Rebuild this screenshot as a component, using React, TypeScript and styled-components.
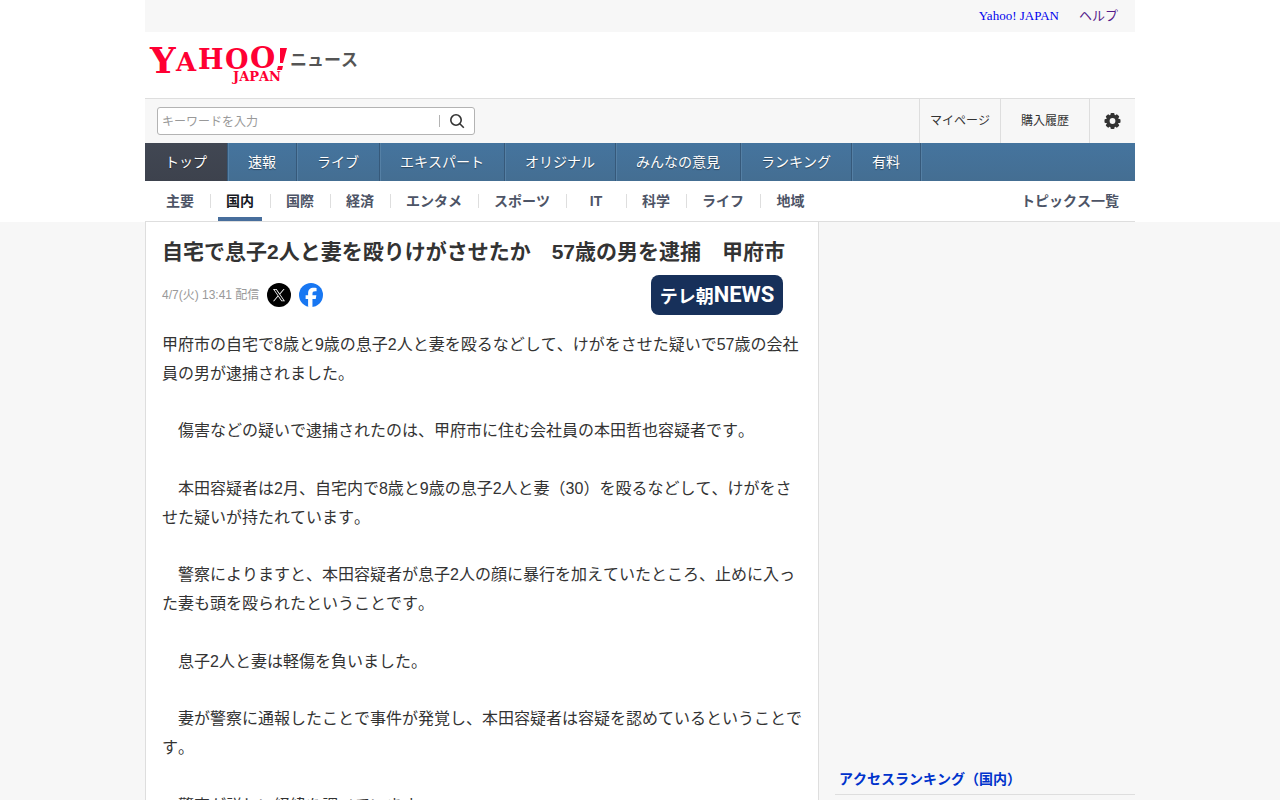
import React from "react";
import styled, { createGlobalStyle, css } from "styled-components";

const sans = `"Liberation Sans", "Noto Sans CJK JP", sans-serif`;

const GlobalStyle = createGlobalStyle`
  * { box-sizing: border-box; }
  body {
    margin: 0;
    background: #f7f7f7;
    color: #333;
    font-family: ${sans};
    font-kerning: none;
  }
  ul { margin: 0; padding: 0; list-style: none; }
  a { text-decoration: none; color: inherit; }
`;

const Header = styled.header`
  background: #fff;
`;

const Container = styled.div`
  width: 100%;
  max-width: 990px;
  margin: 0 auto;
`;

const UtilityBar = styled.div`
  display: flex;
  justify-content: flex-end;
  align-items: center;
  gap: 20px;
  height: 32px;
  padding: 0 17px;
  background: #f7f7f7;
  font: 13px/16px "Liberation Serif", "Noto Sans CJK JP", serif;
`;

const UtilityLink = styled.a<{ $visited?: boolean }>`
  color: ${(p) => (p.$visited ? "#551a8b" : "#0000ee")};
`;

const Masthead = styled.div`
  display: flex;
  align-items: flex-start;
  height: 66px;
  padding: 12px 4px;
`;

const LogoLink = styled.a`
  display: block;
  svg { display: block; overflow: visible; }
`;

const ToolBar = styled.div`
  display: flex;
  justify-content: space-between;
  align-items: center;
  height: 45px;
  padding-left: 12px;
  border-top: 1px solid #dedede;
  background: #f7f7f7;
`;

const SearchForm = styled.form`
  display: flex;
  align-items: center;
  width: 318px;
  height: 28px;
  border: 1px solid #b3b3b3;
  border-radius: 3px;
  background: #fff;
`;

const SearchInput = styled.input`
  flex: 1;
  min-width: 0;
  padding: 1px 4px 0;
  border: 0;
  outline: 0;
  background: transparent;
  font: 12px/18px ${sans};
  &::placeholder { color: #999; opacity: 1; }
`;

const SearchButton = styled.button`
  display: flex;
  align-items: center;
  justify-content: center;
  width: 35px;
  height: 12px;
  padding: 0;
  border: 0;
  border-left: 1px solid #b3b3b3;
  background: transparent;
  svg { flex: none; }
`;

const UserMenu = styled.ul`
  display: flex;
  height: 44px;
`;

const UserItem = styled.li<{ $pad: number }>`
  display: flex;
  align-items: center;
  padding: 0 ${(p) => p.$pad}px;
  border-left: 1px solid #dedede;
  font-size: 12px;
  line-height: 18px;
`;

const GearButton = styled.button`
  display: flex;
  padding: 0;
  border: 0;
  background: transparent;
`;

const GlobalNav = styled.nav`
  background: linear-gradient(#45749e, #446e92);
`;

const GlobalList = styled.ul`
  display: flex;
  height: 38px;
`;

const GlobalItem = styled.li<{ $active?: boolean }>`
  border-right: 1px solid #36597a;
  box-shadow: 1px 0 0 #5580a5;
  ${(p) => p.$active && css`background: linear-gradient(#414753, #3d424d);`}
`;

const GlobalLink = styled.a`
  display: block;
  padding: 0 20px;
  color: #fff;
  font-size: 14px;
  line-height: 38px;
  text-shadow: 0 1px 1px rgba(0, 0, 0, 0.4);
`;

const CategoryNav = styled.nav`
  display: flex;
  justify-content: space-between;
  align-items: center;
  height: 41px;
  padding: 0 16px 0 6px;
  border-bottom: 1px solid #dedede;
  color: #4d5466;
  font-size: 14px;
  font-weight: bold;
  line-height: 14px;
`;

const CategoryList = styled.ul`
  display: flex;
`;

const CategoryItem = styled.li<{ $active?: boolean }>`
  position: relative;
  min-width: 60px;
  padding: 0 16px 0 15px;
  border-right: 1px solid #dedede;
  text-align: center;
  white-space: nowrap;
  &:last-child { border-right: 0; }
  ${(p) =>
    p.$active &&
    css`
      color: #16191f;
      &::after {
        content: "";
        position: absolute;
        left: 7px;
        right: 8px;
        bottom: -13px;
        height: 4px;
        background: #476e9c;
      }
    `}
`;

const Columns = styled.div`
  display: flex;
  gap: 16px;
`;

const Article = styled.article`
  flex: 1;
  min-width: 0;
  padding: 16px 16px 32px;
  border: solid #dedede;
  border-width: 0 1px;
  background: #fff;
`;

const Title = styled.h1`
  margin: 0;
  font-size: 21px;
  line-height: 28px;
`;

const Meta = styled.div`
  display: flex;
  justify-content: space-between;
  align-items: center;
  height: 40px;
  margin: 9px 19px 16px 0;
`;

const Published = styled.div`
  display: flex;
  align-items: center;
  gap: 8px;
  color: #999;
  font-size: 12px;
  line-height: 16px;
`;

const ShareLink = styled.a`
  display: block;
  height: 24px;
`;

const MediaLogo = styled.a`
  display: flex;
  align-items: center;
  justify-content: center;
  width: 132px;
  height: 40px;
  border-radius: 8px;
  background: #17305a;
  color: #fff;
  font: bold 18px/24px "Noto Sans CJK JP", sans-serif;
`;

const MediaLatin = styled.span`
  font: bold 22px/24px Roboto, sans-serif;
`;

const Body = styled.div`
  font-size: 16px;
  line-height: 1.8;
  p { margin: 0 0 1.8em; }
`;

const Sidebar = styled.aside`
  flex: none;
  width: 300px;
`;

const AdSpace = styled.div`
  height: 542px;
`;

const RankingTitle = styled.h2`
  margin: 0;
  padding: 5px 4px;
  border-bottom: 1px solid #dedede;
  color: #0033cc;
  font-size: 14px;
  line-height: 20px;
`;

const globalItems = ["トップ", "速報", "ライブ", "エキスパート", "オリジナル", "みんなの意見", "ランキング", "有料"];
const categories = ["主要", "国内", "国際", "経済", "エンタメ", "スポーツ", "IT", "科学", "ライフ", "地域"];
const paragraphs = [
  "甲府市の自宅で8歳と9歳の息子2人と妻を殴るなどして、けがをさせた疑いで57歳の会社員の男が逮捕されました。",
  "　傷害などの疑いで逮捕されたのは、甲府市に住む会社員の本田哲也容疑者です。",
  "　本田容疑者は2月、自宅内で8歳と9歳の息子2人と妻（30）を殴るなどして、けがをさせた疑いが持たれています。",
  "　警察によりますと、本田容疑者が息子2人の顔に暴行を加えていたところ、止めに入った妻も頭を殴られたということです。",
  "　息子2人と妻は軽傷を負いました。",
  "　妻が警察に通報したことで事件が発覚し、本田容疑者は容疑を認めているということです。",
  "　警察が詳しい経緯を調べています。",
];

const SiteLogo = () => (
  <svg width="210" height="42" viewBox="0 0 210 42" role="img" aria-label="Yahoo! JAPAN ニュース">
    <g fill="#ff0033" fontFamily="DejaVu Serif, serif" fontWeight="bold">
      <text x="1" y="29" fontSize="36">Y</text>
      <text x="27" y="27" fontSize="26">A</text>
      <text x="49" y="25" fontSize="27">H</text>
      <text x="76" y="25" fontSize="27">O</text>
      <text x="101" y="24" fontSize="29">O</text>
      <path d="M131 4h7l-4 15h-3zM129 22h5l-1 4h-5z" />
      <text x="84" y="37" fontSize="13">JAPAN</text>
    </g>
    <text x="141" y="22" fill="#555" fontSize="17" fontWeight="bold" fontFamily="Noto Sans CJK JP, sans-serif">
      ニュース
    </text>
  </svg>
);

const SearchIcon = () => (
  <svg width="16" height="16" viewBox="0 0 16 16" fill="none" stroke="#333" strokeWidth="1.6">
    <circle cx="7" cy="7" r="5.2" />
    <path d="m10.8 10.8 4 4" />
  </svg>
);

const GearIcon = () => (
  <svg width="17" height="16" viewBox="0 0 16 16">
    <g fill="#333">
      {[0, 45, 90, 135].map((angle) => (
        <rect key={angle} x="6" y="0" width="4" height="16" rx="1" transform={`rotate(${angle} 8 8)`} />
      ))}
      <circle cx="8" cy="8" r="6.4" />
    </g>
    <circle cx="8" cy="8" r="2.9" fill="#f7f7f7" />
  </svg>
);

const XIcon = () => (
  <svg width="24" height="24" viewBox="0 0 24 24">
    <circle cx="12" cy="12" r="12" />
    <path
      transform="translate(6 6) scale(.01)"
      fill="#fff"
      d="M714 519 1161 0h-106L667 451 357 0H0l469 682L0 1227h106l410-476 327 476h357L714 519ZM569 688l-47-68L144 80h163l305 436 47 68 396 567H892L569 688Z"
    />
  </svg>
);

const FacebookIcon = () => (
  <svg width="24" height="24" viewBox="0 0 24 24">
    <circle cx="12" cy="12" r="12" fill="#1877f2" />
    <path
      fill="#fff"
      d="M9.1 23.65V15.98H6.62V12.3H9.1v-1.58c0-4.09 1.85-5.98 5.86-5.98.76 0 2.07.15 2.61.3v3.32c-.28-.03-.78-.04-1.39-.04-1.97 0-2.73.75-2.73 2.68v1.3h3.92l-.67 3.67h-3.25v7.94a12 12 0 0 1-4.35-.26Z"
    />
  </svg>
);

export default function App() {
  return (
    <>
      <GlobalStyle />
      <Header>
        <Container>
          <UtilityBar>
            <UtilityLink href="#">Yahoo! JAPAN</UtilityLink>
            <UtilityLink href="#" $visited>ヘルプ</UtilityLink>
          </UtilityBar>
          <Masthead>
            <LogoLink href="#"><SiteLogo /></LogoLink>
          </Masthead>
          <ToolBar>
            <SearchForm role="search">
              <SearchInput type="text" placeholder="キーワードを入力" aria-label="キーワードを入力" />
              <SearchButton type="button" aria-label="検索"><SearchIcon /></SearchButton>
            </SearchForm>
            <UserMenu>
              <UserItem $pad={10}><a href="#">マイページ</a></UserItem>
              <UserItem $pad={20}><a href="#">購入履歴</a></UserItem>
              <UserItem $pad={14}>
                <GearButton type="button" aria-label="設定"><GearIcon /></GearButton>
              </UserItem>
            </UserMenu>
          </ToolBar>
          <GlobalNav>
            <GlobalList>
              {globalItems.map((label, i) => (
                <GlobalItem key={label} $active={i === 0}>
                  <GlobalLink href="#">{label}</GlobalLink>
                </GlobalItem>
              ))}
            </GlobalList>
          </GlobalNav>
          <CategoryNav>
            <CategoryList>
              {categories.map((label) => (
                <CategoryItem key={label} $active={label === "国内"}>
                  <a href="#">{label}</a>
                </CategoryItem>
              ))}
            </CategoryList>
            <a href="#">トピックス一覧</a>
          </CategoryNav>
        </Container>
      </Header>
      <Container>
        <Columns>
          <Article>
            <Title>自宅で息子2人と妻を殴りけがさせたか　57歳の男を逮捕　甲府市</Title>
            <Meta>
              <Published>
                <time>4/7(火) 13:41 配信</time>
                <ShareLink href="#" aria-label="X"><XIcon /></ShareLink>
                <ShareLink href="#" aria-label="Facebook"><FacebookIcon /></ShareLink>
              </Published>
              <MediaLogo href="#">テレ朝<MediaLatin>NEWS</MediaLatin></MediaLogo>
            </Meta>
            <Body>
              {paragraphs.map((text) => <p key={text}>{text}</p>)}
            </Body>
          </Article>
          <Sidebar>
            <AdSpace />
            <RankingTitle>アクセスランキング（国内）</RankingTitle>
          </Sidebar>
        </Columns>
      </Container>
    </>
  );
}
